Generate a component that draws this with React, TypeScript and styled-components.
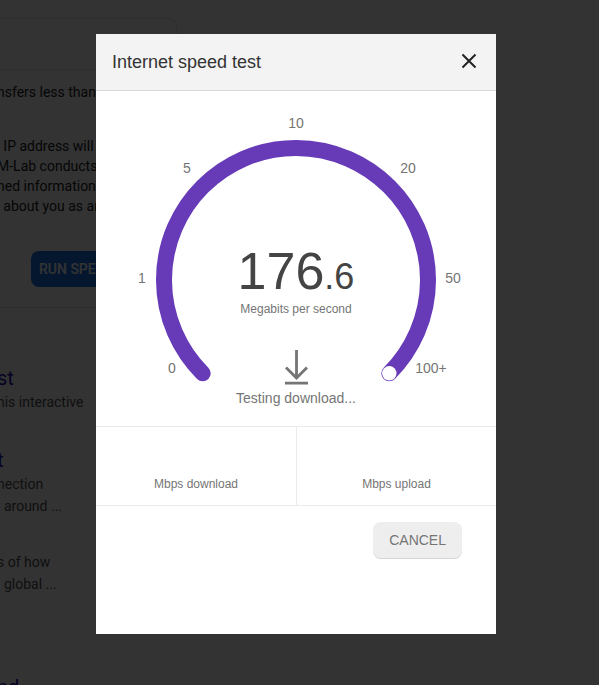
import React from "react";
import styled, { createGlobalStyle } from "styled-components";

const GlobalStyle = createGlobalStyle`
  *, *::before, *::after { box-sizing: border-box; }
  body {
    margin: 0;
    background: #fff;
    font-family: "Liberation Sans", Arial, sans-serif;
  }
`;

const Page = styled.main`
  height: 100vh;
  overflow: hidden;
  font-family: Roboto, Arial, sans-serif;
  color: #202124;
`;

const AnswerCard = styled.section`
  width: 80%;
  padding-top: 18px;
  padding-bottom: 20px;
  border-bottom: 1px solid #e4e5e8;
`;

const AnswerTop = styled.div`
  width: 37%;
  height: 52px;
  border: 1px solid #e4e5e8;
  border-left: 0;
  border-radius: 0 8px 0 0;
`;

const Paragraph = styled.p`
  margin: 12px 0 34px -3px;
  font-size: 14px;
  line-height: 20px;
  white-space: pre;
  & + & {
    margin-bottom: 35px;
  }
`;

const RunButton = styled.button`
  display: block;
  margin-left: 31px;
  height: 36px;
  padding: 0 8px;
  border: 0;
  border-radius: 8px;
  background: #1a73e8;
  color: #fff;
  font: 500 14px/34px Roboto, Arial, sans-serif;
`;

const Results = styled.section`
  display: flex;
  flex-direction: column;
  gap: 34px;
  margin-left: -3px;
  padding-top: 57px;
`;

const Result = styled.article`
  color: #4d5156;
  font-size: 14px;
  line-height: 22px;
  white-space: pre;
  &:last-child {
    margin-top: 45px;
  }
`;

const ResultLink = styled.a`
  display: block;
  color: #1a0dab;
  font-size: 20px;
  line-height: 26px;
  text-decoration: none;
`;

const Overlay = styled.div`
  position: fixed;
  inset: 0;
  display: flex;
  justify-content: center;
  align-items: flex-start;
  padding: 34px 7px 0 0;
  background: rgba(0, 0, 0, 0.8);
`;

const Dialog = styled.section`
  width: 100%;
  max-width: 400px;
  min-height: 600px;
  background: #fff;
  color: #757575;
`;

const DialogHeader = styled.header`
  display: flex;
  align-items: center;
  justify-content: space-between;
  padding: 16px;
  background: #f3f3f3;
  border-bottom: 1px solid #dadada;
`;

const Title = styled.h1`
  margin: 0;
  color: #333;
  font-size: 18px;
  font-weight: 400;
  line-height: 24px;
`;

const CloseButton = styled.button`
  display: flex;
  padding: 0;
  border: 0;
  background: none;
  color: #222;
`;

const Gauge = styled.div`
  display: grid;
  & > * {
    grid-area: 1 / 1;
  }
`;

const Dial = styled.svg`
  display: block;
  width: 100%;
  font-size: 14px;
  fill: #757575;
  text-anchor: middle;
`;

const Readout = styled.div`
  display: flex;
  flex-direction: column;
  align-items: center;
  padding-top: 150px;
`;

const Speed = styled.output`
  color: #444;
  font-size: 52px;
  line-height: 60px;
`;

const Fraction = styled.span`
  font-size: 36px;
  line-height: 36px;
`;

const Unit = styled.span`
  margin-bottom: 33px;
  font-size: 12px;
  line-height: 16px;
`;

const Status = styled.span`
  margin-top: 2px;
  font-size: 14px;
  line-height: 20px;
`;

const Totals = styled.div`
  display: grid;
  grid-template-columns: 1fr 1fr;
  border: solid #ebebeb;
  border-width: 1px 0;
`;

const Total = styled.div`
  padding: 49px 0 13px;
  font-size: 12px;
  line-height: 16px;
  text-align: center;
  & + & {
    border-left: 1px solid #ebebeb;
  }
`;

const Actions = styled.footer`
  display: flex;
  justify-content: flex-end;
  padding: 16px 34px;
`;

const CancelButton = styled.button`
  height: 36px;
  padding: 0 16px;
  border: 0;
  border-radius: 8px;
  background: #eee;
  box-shadow: 0 1px 0 #d4d4d4;
  color: #757575;
  font: 14px/36px "Liberation Sans", Arial, sans-serif;
`;

const ticks = [
  { label: "0", x: 76, y: 282 },
  { label: "1", x: 46, y: 192 },
  { label: "5", x: 91, y: 82 },
  { label: "10", x: 200, y: 37 },
  { label: "20", x: 312, y: 82 },
  { label: "50", x: 357, y: 192 },
  { label: "100+", x: 335, y: 282 },
];

export default function App() {
  return (
    <>
      <GlobalStyle />
      <Page aria-hidden="true">
        <AnswerCard>
          <AnswerTop />
          <Paragraph>nsfers less than</Paragraph>
          <Paragraph>
            {" \u2009IP address will b\nM-Lab conducts\nned information\n \u2009about you as an"}
          </Paragraph>
          <RunButton tabIndex={-1}>RUN SPE</RunButton>
        </AnswerCard>
        <Results>
          <Result>
            <ResultLink href="#quiz" tabIndex={-1}>st</ResultLink>
            {"his interactive"}
          </Result>
          <Result>
            <ResultLink href="#connection" tabIndex={-1}>t</ResultLink>
            {"nection\n  around ..."}
          </Result>
          <Result>{"s of how\n  global ..."}</Result>
          <Result>
            <ResultLink href="#broadband" tabIndex={-1}>nd</ResultLink>
          </Result>
        </Results>
      </Page>
      <Overlay>
        <Dialog role="dialog" aria-modal="true" aria-labelledby="dialog-title">
          <DialogHeader>
            <Title id="dialog-title">Internet speed test</Title>
            <CloseButton aria-label="Close">
              <svg width="22" height="22" viewBox="0 0 22 22">
                <path
                  d="M4.5 3.5l13 13M17.5 3.5l-13 13"
                  stroke="currentColor"
                  strokeWidth="2"
                />
              </svg>
            </CloseButton>
          </DialogHeader>
          <Gauge>
            <Dial viewBox="0 0 400 335">
              <path
                d="M106.7 282.3A132 132 0 1 1 293.3 282.3"
                fill="none"
                stroke="#673ab7"
                strokeWidth="16"
                strokeLinecap="round"
              />
              <circle cx="293.3" cy="282.3" r="7.2" fill="#fff" />
              {ticks.map((tick) => (
                <text key={tick.label} x={tick.x} y={tick.y}>
                  {tick.label}
                </text>
              ))}
            </Dial>
            <Readout>
              <Speed>
                176<Fraction>.6</Fraction>
              </Speed>
              <Unit>Megabits per second</Unit>
              <svg width="24" height="36" viewBox="0 0 24 36">
                <path
                  d="M12.5 0v27M2 17.5L12.5 28L23 17.5M1 33.2h23"
                  fill="none"
                  stroke="#757575"
                  strokeWidth="2.8"
                />
              </svg>
              <Status>Testing download...</Status>
            </Readout>
          </Gauge>
          <Totals>
            <Total>Mbps download</Total>
            <Total>Mbps upload</Total>
          </Totals>
          <Actions>
            <CancelButton>CANCEL</CancelButton>
          </Actions>
        </Dialog>
      </Overlay>
    </>
  );
}
